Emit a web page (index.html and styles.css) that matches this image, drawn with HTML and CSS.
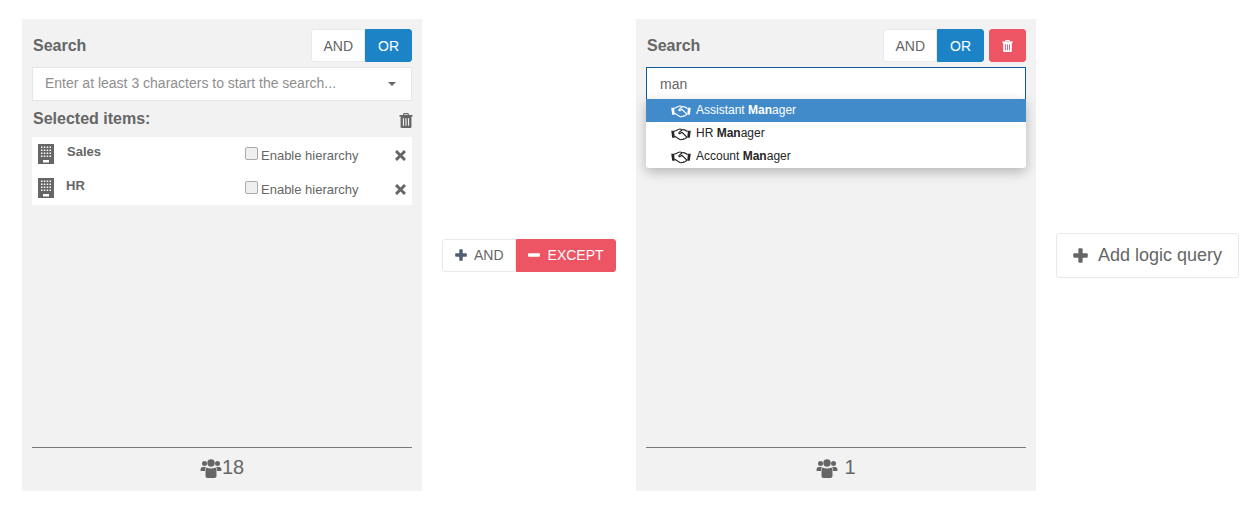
FILE: index.html
```html
<!DOCTYPE html>
<html>
<head>
  <meta charset="UTF-8" />
  <title>Logic query builder</title>
  <link rel="stylesheet" href="styles.css">
</head>
<body>
  <svg class="icon-defs" width="0" height="0">
    <symbol id="i-plus" viewBox="0 0 14 14">
      <path d="M5 1.2q0-1 1-1h2q1 0 1 1V5h3.8q1 0 1 1v2q0 1-1 1H9v3.8q0 1-1 1H6q-1 0-1-1V9H1.2q-1 0-1-1V6q0-1 1-1H5z" />
    </symbol>
    <symbol id="i-minus" viewBox="0 0 14 14">
      <path d="M1 5h12q1 0 1 1v2q0 1-1 1H1q-1 0-1-1V6q0-1 1-1z" />
    </symbol>
    <symbol id="i-trash" viewBox="0 0 14 16">
      <path d="M4.6 0h4.8l1 2H14v1.8h-1.2V15q0 1-1 1H2.2q-1 0-1-1V3.800H0V2h3.600zM5.300 1.200 4.900 2h4.200l-.4-.8zM3.700 5.500v8h1.200v-8zm2.700 0v8h1.200v-8zm2.700 0v8h1.200v-8z" />
    </symbol>
    <symbol id="i-times" viewBox="0 0 12 12">
      <path d="M2.600.4 6 3.800 9.400.4q.4-.4.800 0l1.400 1.400q.4.400 0 .8L8.200 6l3.400 3.400q.4.400 0 .8l-1.400 1.400q-.4.400-.8 0L6 8.200l-3.400 3.400q-.4.400-.8 0L.4 10.200q-.4-.4 0-.8L3.800 6 .4 2.600q-.4-.4 0-.8L1.800.4q.4-.4.800 0z" />
    </symbol>
    <symbol id="i-building" viewBox="0 0 16 20">
      <path fill-rule="evenodd" d="M0 0h16v20H0zM3 2.500v1.500h1.500V2.500zm2.800 0v1.500h1.500V2.500zm2.900 0v1.500h1.500V2.500zm2.800 0v1.500H13V2.500zM3 5.500V7h1.500V5.500zm2.800 0V7h1.500V5.500zm2.900 0V7h1.500V5.500zm2.800 0V7H13V5.500zM3 8.500V10h1.500V8.500zm2.800 0V10h1.500V8.500zm2.900 0V10h1.500V8.500zm2.800 0V10H13V8.500zM3 11.500V13h1.500v-1.500zm2.800 0V13h1.500v-1.500zm2.900 0V13h1.500v-1.500zm2.800 0V13H13v-1.500zM5 16v2.500h6V16z" />
    </symbol>
    <symbol id="i-users" viewBox="0 0 21 20">
      <circle cx="4" cy="5.500" r="2.500" />
      <circle cx="17" cy="5.500" r="2.500" />
      <circle cx="10.500" cy="5" r="3.700" />
      <path d="M0 12.500q0-3.500 2-3.500h3.500q-1 1.200-1 4H1q-1 0-1-.5zM21 12.500q0-3.500-2-3.500h-3.500q1 1.200 1 4H20q1 0 1-.5zM6.300 9.500q1.500 1 4.200 1t4.200-1q1.300.3 1.300 4.500V18q0 2-2 2H7q-2 0-2-2v-4q0-4.200 1.300-4.500z" />
    </symbol>
    <symbol id="i-handshake" viewBox="0 0 21 14">
      <path class="hs-cuff" d="M0 3h3l.8 7.500H1zM21 3h-3l-.8 7.500H20z" />
      <path class="hs-line" d="M3 3.500q3-.5 4.500-2 2.500-1 4 .5l-3.200 2.800q-.5 1.300 1 1.400l2.200-1.600 5 4.900q.3 1.300-1 1.300-1 1.500-2 .8-1 1.200-2.200.6-1 1-2.400 0-2.500-1.500-5.500-3.500M11.500 2q2.500-1 5.500 1.500h1" />
    </symbol>
  </svg>

  <div class="page">
    <section class="panel">
      <div class="panel-head">
        <span class="panel-title">Search</span>
        <div class="btn-group">
          <button class="btn btn-toggle">AND</button>
          <button class="btn btn-blue">OR</button>
        </div>
      </div>
      <div class="select-box">
        <span class="placeholder">Enter at least 3 characters to start the search...</span>
        <span class="caret"></span>
      </div>
      <div class="selected-head">
        <span class="panel-title">Selected items:</span>
        <svg class="icon trash-all"><use href="#i-trash" /></svg>
      </div>
      <ul class="selected-list">
        <li class="selected-item">
          <svg class="icon building"><use href="#i-building" /></svg>
          <span class="item-name">Sales</span>
          <label class="hierarchy"><input type="checkbox" /> Enable hierarchy</label>
          <svg class="icon remove"><use href="#i-times" /></svg>
        </li>
        <li class="selected-item item-hr">
          <svg class="icon building"><use href="#i-building" /></svg>
          <span class="item-name">HR</span>
          <label class="hierarchy"><input type="checkbox" /> Enable hierarchy</label>
          <svg class="icon remove"><use href="#i-times" /></svg>
        </li>
      </ul>
      <div class="panel-foot">
        <svg class="icon users"><use href="#i-users" /></svg><span>18</span>
      </div>
    </section>

    <div class="joiner">
      <div class="btn-group">
        <button class="btn btn-join"><svg class="icon plus-sm"><use href="#i-plus" /></svg>AND</button>
        <button class="btn btn-join btn-red"><svg class="icon plus-sm"><use href="#i-minus" /></svg>EXCEPT</button>
      </div>
    </div>

    <section class="panel">
      <div class="panel-head">
        <span class="panel-title">Search</span>
        <div class="head-actions">
          <div class="btn-group">
            <button class="btn btn-toggle">AND</button>
            <button class="btn btn-blue">OR</button>
          </div>
          <button class="btn btn-red btn-delete"><svg class="icon trash-sm"><use href="#i-trash" /></svg></button>
        </div>
      </div>
      <div class="search-wrap">
        <div class="select-box is-open">man</div>
        <ul class="dropdown">
          <li class="active"><svg class="icon handshake"><use href="#i-handshake" /></svg><span>Assistant <b>Man</b>ager</span></li>
          <li><svg class="icon handshake"><use href="#i-handshake" /></svg><span>HR <b>Man</b>ager</span></li>
          <li><svg class="icon handshake"><use href="#i-handshake" /></svg><span>Account <b>Man</b>ager</span></li>
        </ul>
      </div>
      <div class="panel-foot">
        <svg class="icon users"><use href="#i-users" /></svg><span class="count-gap">1</span>
      </div>
    </section>

    <div class="add-wrap">
      <button class="btn btn-add"><svg class="icon plus-lg"><use href="#i-plus" /></svg>Add logic query</button>
    </div>
  </div>
</body>
</html>
```

FILE: styles.css
```css
* {
  box-sizing: border-box;
}

body {
  margin: 0;
  font-family: "Liberation Sans", Arial, sans-serif;
  color: #666;
  background: #fff;
}

.icon-defs {
  position: absolute;
}

.icon {
  display: block;
  flex: none;
  fill: currentColor;
}

.page {
  display: flex;
  padding: 19px 0 0 22px;
}

.panel {
  display: flex;
  flex-direction: column;
  width: 400px;
  height: 472px;
  padding: 10px;
  background: #f2f2f2;
}

.panel-head {
  display: flex;
  align-items: center;
  justify-content: space-between;
  height: 33px;
  padding-left: 1px;
}

.panel-title {
  font-size: 16px;
  font-weight: bold;
}

.head-actions {
  display: flex;
  gap: 5px;
}

.btn-group {
  display: flex;
}

.btn {
  height: 33px;
  padding: 0 12px;
  border: 1px solid #e7eaec;
  border-radius: 3px;
  background: #fff;
  color: #666;
  font: 14px "Liberation Sans", Arial, sans-serif;
}

.btn-group .btn:first-child {
  border-radius: 3px 0 0 3px;
}

.btn-group .btn:last-child {
  border-radius: 0 3px 3px 0;
}

.btn-toggle {
  padding: 0 11px;
}

.btn-blue {
  border-color: #1c84c6;
  background: #1c84c6;
  color: #fff;
}

.btn-red {
  border-color: #ed5565;
  background: #ed5565;
  color: #fff;
}

.btn-delete {
  width: 37px;
  padding: 0 12px;
}

.trash-sm {
  width: 11px;
  height: 12px;
}

.select-box {
  display: flex;
  align-items: center;
  justify-content: space-between;
  height: 34px;
  margin-top: 5px;
  padding: 0 15px 0 13px;
  border: 1px solid #e5e6e7;
  background: #fff;
  font-size: 14px;
}

.placeholder {
  margin: 0 0 2px -1px;
  color: #8e8e8e;
}

.caret {
  border-top: 4px solid #666;
  border-left: 4px solid transparent;
  border-right: 4px solid transparent;
}

.selected-head {
  display: flex;
  align-items: center;
  justify-content: space-between;
  margin-top: 7px;
  height: 22px;
  padding-left: 1px;
}

.trash-all {
  width: 14px;
  height: 15px;
  margin: 3px -1px 0 0;
}

.selected-list {
  margin: 7px 0 0;
  padding: 0;
  list-style: none;
  background: #fff;
}

.selected-item {
  display: flex;
  align-items: flex-start;
  height: 34px;
  padding: 7px 5px 0 6px;
}

.building {
  width: 16px;
  height: 20px;
}

.item-name {
  width: 179px;
  margin: 0 0 0 13px;
  font-size: 13px;
  font-weight: bold;
  line-height: 15px;
}

.item-hr .item-name {
  margin-left: 12px;
  width: 180px;
}

.hierarchy {
  display: flex;
  align-items: center;
  gap: 3px;
  width: 149px;
  margin-top: 4px;
  font-size: 13px;
  line-height: 16px;
}

.hierarchy input {
  appearance: none;
  flex: none;
  width: 13px;
  height: 13px;
  margin: -5px 0 0 -1px;
  border: 1px solid #ababab;
  border-radius: 2px;
  background: #efefef;
}

.remove {
  width: 11px;
  height: 11px;
  margin-top: 6px;
}

.panel-foot {
  display: flex;
  align-items: center;
  justify-content: center;
  height: 34px;
  margin-top: auto;
  padding-top: 6px;
  border-top: 1px solid #7a7a7a;
  font-size: 20px;
}

.users {
  width: 22px;
  height: 20px;
}

.count-gap {
  margin-left: 6px;
}

.search-wrap {
  position: relative;
}

.select-box.is-open {
  border-color: #0f5c94;
}

.dropdown {
  position: absolute;
  top: 37px;
  left: 0;
  right: 0;
  margin: 0;
  padding: 0;
  list-style: none;
  background: #fff;
  border-radius: 0 0 3px 3px;
  box-shadow: 0 4px 12px rgba(0, 0, 0, 0.25);
  color: #262626;
  font-size: 12px;
}

.dropdown li {
  display: flex;
  align-items: center;
  gap: 5px;
  height: 23px;
  padding: 0 0 2px 25px;
}

.dropdown li.active {
  background: #428bca;
  color: #fff;
}

.handshake {
  width: 20px;
  height: 13px;
  margin-top: 4px;
}

.hs-cuff {
  fill: currentColor;
}

.hs-line {
  fill: none;
  stroke: currentColor;
  stroke-width: 1.200;
}

.joiner {
  display: flex;
  align-items: center;
  width: 214px;
  padding: 0 20px;
}

.btn-join {
  display: flex;
  align-items: center;
  gap: 7px;
  padding: 0 11px 0 12px;
}

.btn-join.btn-red {
  gap: 8px;
  padding: 0 11px;
}

.plus-sm {
  width: 12px;
  height: 12px;
}

.btn-join:first-child .plus-sm {
  color: #4d5f70;
}

.add-wrap {
  display: flex;
  align-items: center;
  margin-left: 20px;
}

.btn-add {
  display: flex;
  align-items: center;
  gap: 10px;
  height: 45px;
  padding: 0 16px;
  font-size: 18px;
}

.plus-lg {
  width: 15px;
  height: 15px;
}
```
